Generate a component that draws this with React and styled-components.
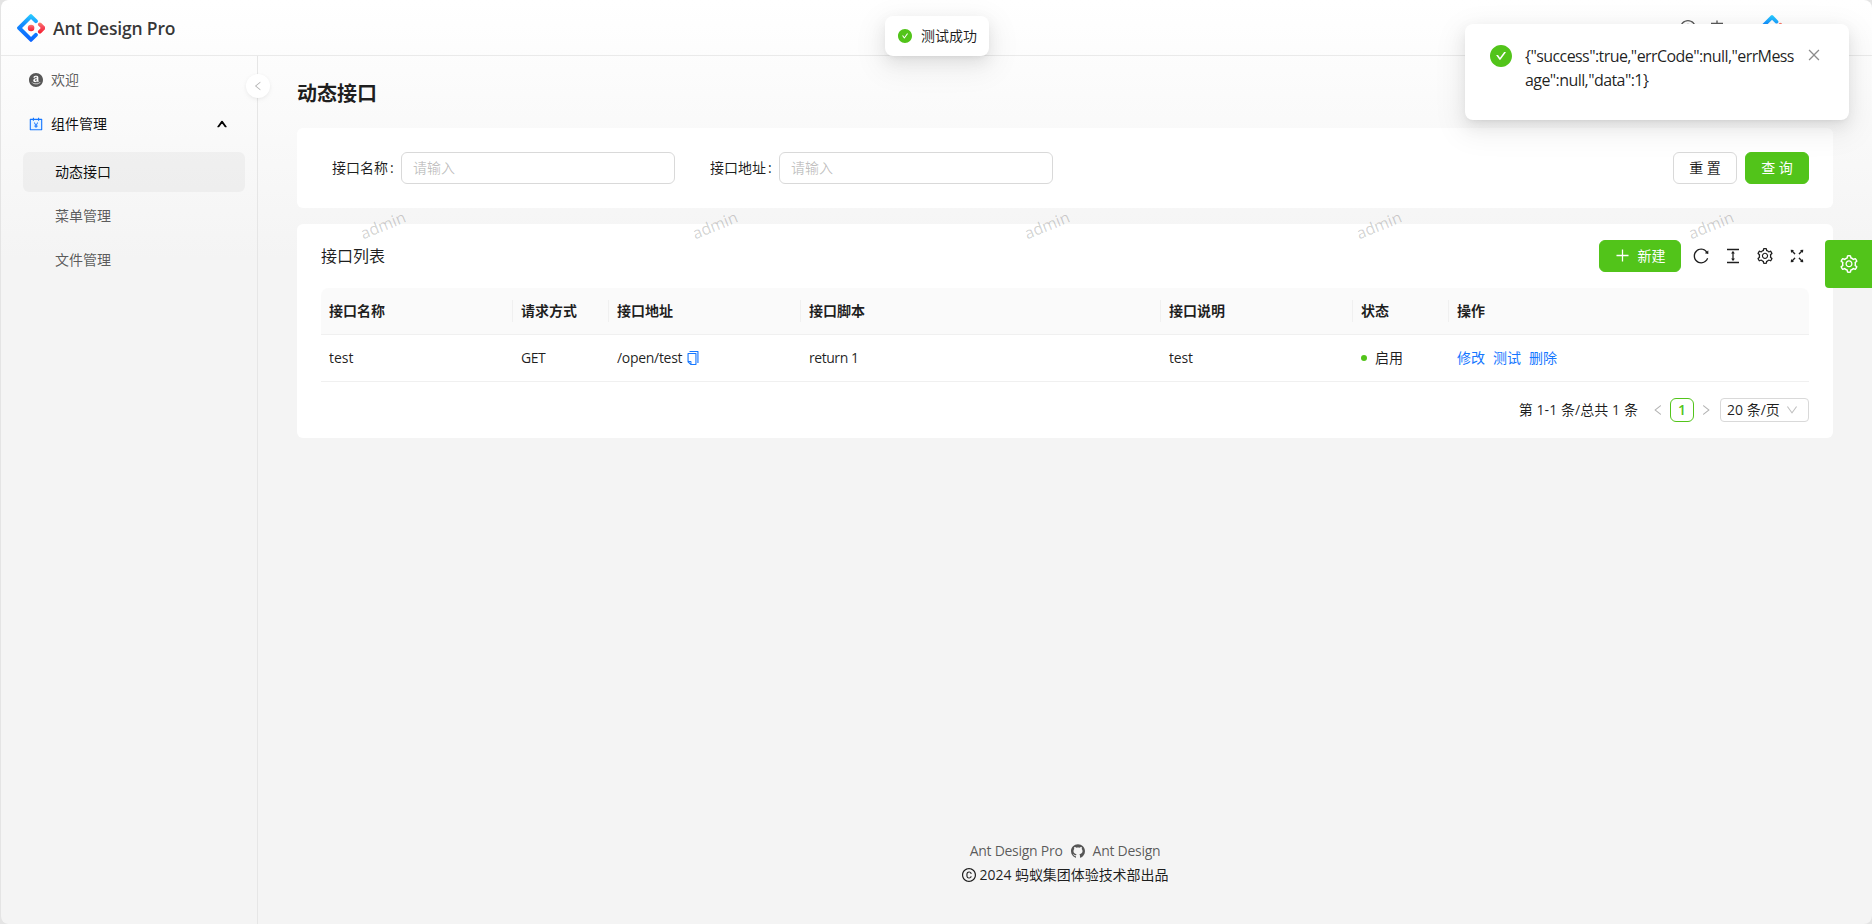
import React from "react";
import styled, { createGlobalStyle } from "styled-components";
import {
  AiFillAmazonCircle, AiOutlineReload, AiOutlineColumnHeight, AiOutlineSetting, AiOutlineFullscreen,
  AiFillCheckCircle, AiOutlineClose, AiOutlinePlus, AiOutlineLeft, AiOutlineRight, AiOutlineDown,
  AiOutlineUp, AiFillGithub, AiOutlineCopyright, AiOutlineCopy, AiOutlineAccountBook, AiOutlineQuestionCircle,
} from "react-icons/ai";

const GREEN = "#52c41a";
const BLUE = "#1677ff";
const TEXT = "rgba(0,0,0,.88)";
const MUTED = "rgba(0,0,0,.65)";

const GlobalStyle = createGlobalStyle`
  * { box-sizing: border-box; }
  body {
    margin: 0;
    background: #e4e4e4;
    font-family: "Open Sans", "Noto Sans CJK SC", sans-serif;
    font-size: 14px;
    line-height: 22px;
    color: ${TEXT};
    overflow: hidden;
  }
  svg { display: block; flex: none; }
  /* the icon set keeps a 64-unit margin inside its 1024 box; scale it away */
  svg[viewBox="0 0 1024 1024"] { transform: scale(1.143); }
`;

const Page = styled.div`
  position: relative;
  display: flex;
  flex-direction: column;
  height: 924px;
  border-left: 1px solid #e4e4e4;
  border-radius: 8px;
  overflow: hidden;
  background: linear-gradient(#fff, #f4f4f4 28%) #f4f4f4;
`;
const Header = styled.header`
  display: flex;
  align-items: center;
  justify-content: space-between;
  height: 56px;
  flex: none;
  padding: 0 16px;
  border-bottom: 1px solid #eaeaea;
`;
const Brand = styled.div`
  display: flex;
  align-items: center;
  gap: 8px;
`;
const BrandName = styled.h1`
  margin: 0;
  font-size: 17.5px;
  font-weight: 600;
  color: rgba(0,0,0,.8);
  letter-spacing: -.18px;
`;
const HeaderTools = styled.div`
  display: flex;
  align-items: center;
  color: ${MUTED};
  font-size: 16px;
  gap: 13px;
  padding-right: 71px;
`;
const Avatar = styled.span`
  margin-left: 21px;
`;
const Body = styled.div`
  display: flex;
  flex: 1;
  min-height: 0;
`;
const Sider = styled.nav`
  position: relative;
  width: 257px;
  flex: none;
  padding: 4px 12px 0 22px;
  border-right: 1px solid #e6e6e6;
`;
const MenuItem = styled.div`
  display: flex;
  align-items: center;
  gap: 8px;
  height: 40px;
  margin-bottom: 4px;
  padding: 0 18px 0 6px;
  color: ${(p) => (p.$dark ? "rgba(0,0,0,.95)" : MUTED)};
`;
const BookIcon = styled(AiOutlineAccountBook)`
  color: ${BLUE};
  background: linear-gradient(#e6f4ff, #e6f4ff) center 60% / 70% 62% no-repeat;
`;
const SubItem = styled.div`
  display: flex;
  align-items: center;
  height: 40px;
  margin-bottom: 4px;
  padding-left: 32px;
  border-radius: 6px;
  color: ${(p) => (p.$active ? "rgba(0,0,0,.95)" : MUTED)};
  background: ${(p) => (p.$active ? "rgba(0,0,0,.035)" : "transparent")};
`;
const SubMenu = styled.div`
  padding-top: 4px;
`;
const Grow = styled.span`
  flex: 1;
`;
const CollapseButton = styled.div`
  position: absolute;
  top: 18px;
  right: -13px;
  width: 24px;
  height: 24px;
  display: flex;
  align-items: center;
  justify-content: center;
  border-radius: 50%;
  background: #fff;
  color: rgba(0,0,0,.3);
  font-size: 10px;
  box-shadow: 0 2px 8px -2px rgba(0,0,0,.06), 0 1px 4px -1px rgba(25,15,15,.08);
`;
const Main = styled.main`
  flex: 1;
  display: flex;
  flex-direction: column;
  padding: 22px 39px 0 39px;
`;
const Title = styled.h2`
  margin: 0 0 18px;
  font-size: 20px;
  line-height: 32px;
  font-weight: 700;
`;
const Card = styled.section`
  border-radius: 6px;
  background: #fff;
`;
const SearchCard = styled(Card)`
  display: flex;
  align-items: center;
  height: 80px;
  margin-bottom: 16px;
  padding: 0 24px 0 35px;
`;
const Field = styled.label`
  display: flex;
  align-items: center;
  width: 378px;
`;
const FieldLabel = styled.span`
  width: 69px;
  &::after { content: ":"; margin-left: 2px; }
`;
const TextInput = styled.input`
  width: 274px;
  height: 32px;
  padding: 0 11px 2px;
  border: 1px solid #d9d9d9;
  border-radius: 6px;
  background: #fff;
  font: inherit;
  &::placeholder { color: rgba(0,0,0,.25); }
`;
const Button = styled.button`
  display: flex;
  align-items: center;
  justify-content: center;
  gap: 8px;
  width: ${(p) => p.$width};
  height: 32px;
  padding: 0 0 1px;
  margin-left: 8px;
  border: 1px solid ${(p) => (p.$primary ? GREEN : "#d9d9d9")};
  border-radius: 6px;
  background: ${(p) => (p.$primary ? GREEN : "#fff")};
  color: ${(p) => (p.$primary ? "#fff" : TEXT)};
  font: inherit;
`;
const ListCard = styled(Card)`
  height: 214px;
  padding: 0 24px;
`;
const Toolbar = styled.div`
  display: flex;
  align-items: center;
  height: 64px;
`;
const ToolbarTitle = styled.span`
  flex: 1;
  font-size: 16px;
`;
const ToolIcons = styled.div`
  display: flex;
  gap: 16px;
  margin: 0 4px 0 12px;
  font-size: 16px;
`;
const Row = styled.div`
  display: grid;
  grid-template-columns: 192px 96px 192px 360px 192px 96px 1fr;
  align-items: center;
  height: 47px;
  border-bottom: 1px solid #f0f0f0;
`;
const HeadRow = styled(Row)`
  background: #fafafa;
  border-radius: 8px 8px 0 0;
  font-weight: 700;
`;
const Cell = styled.div`
  display: flex;
  align-items: center;
  padding: 0 8px;
  height: 22px;
  border-right: 1px solid ${(p) => (p.$divider ? "#f0f0f0" : "transparent")};
`;
const CellText = styled.span`
  letter-spacing: ${(p) => p.$ls || "0"};
`;
const CopyIcon = styled(AiOutlineCopy)`
  margin-left: 4px;
  color: ${BLUE};
`;
const StatusDot = styled.i`
  width: 6px;
  height: 6px;
  margin-right: 8px;
  border-radius: 50%;
  background: ${GREEN};
`;
const Actions = styled.div`
  display: flex;
  gap: 8px;
  color: ${BLUE};
`;
const Pagination = styled.div`
  display: flex;
  align-items: center;
  justify-content: flex-end;
  height: 24px;
  margin-top: 16px;
`;
const PageTotal = styled.span`
  margin-right: 8px;
  letter-spacing: .08px;
`;
const PageArrow = styled.span`
  display: flex;
  justify-content: center;
  width: 24px;
  color: rgba(0,0,0,.3);
  font-size: 12px;
`;
const PageNumber = styled.span`
  display: flex;
  align-items: center;
  justify-content: center;
  width: 24px;
  height: 24px;
  border: 1px solid ${GREEN};
  border-radius: 6px;
  color: ${GREEN};
  font-weight: 600;
  background: #fff;
`;
const PageSize = styled.div`
  display: flex;
  align-items: center;
  justify-content: space-between;
  width: 89px;
  height: 24px;
  margin-left: 2px;
  padding: 0 10px 0 6px;
  border: 1px solid #d9d9d9;
  border-radius: 4px;
  svg { color: rgba(0,0,0,.25); font-size: 12px; }
`;
const Footer = styled.footer`
  margin-top: auto;
  margin-bottom: 38px;
  display: flex;
  flex-direction: column;
  align-items: center;
  gap: 2px;
`;
const FooterLine = styled.div`
  display: flex;
  align-items: center;
  gap: ${(p) => p.$gap};
  color: ${(p) => (p.$muted ? MUTED : TEXT)};
`;
const Latin = styled.span`
  letter-spacing: ${(p) => p.$ls || "-.27px"};
`;
const Watermark = styled.span`
  position: absolute;
  left: ${(p) => p.$x}px;
  top: 215px;
  width: 48px;
  text-align: center;
  font-size: 16px;
  line-height: 20px;
  color: rgba(0,0,0,.19);
  transform: rotate(-22deg);
`;
const Message = styled.div`
  position: absolute;
  left: 884px;
  top: 16px;
  display: flex;
  align-items: center;
  gap: 8px;
  width: 104px;
  height: 40px;
  padding: 0 12px;
  border-radius: 8px;
  background: #fff;
  box-shadow: 0 6px 16px 0 rgba(0,0,0,.08), 0 3px 6px -4px rgba(0,0,0,.12), 0 9px 28px 8px rgba(0,0,0,.05);
  > svg { color: ${GREEN}; font-size: 14px; margin: 1px; }
`;
const Notice = styled.div`
  position: absolute;
  left: 1464px;
  top: 24px;
  display: flex;
  width: 384px;
  height: 96px;
  padding: 20px 24px;
  border-radius: 8px;
  background: #fff;
  font-size: 16px;
  line-height: 24px;
  box-shadow: 0 6px 16px 0 rgba(0,0,0,.08), 0 3px 6px -4px rgba(0,0,0,.12), 0 9px 28px 8px rgba(0,0,0,.05);
`;
const NoticeIcon = styled(AiFillCheckCircle)`
  margin: 1px 0 0 1px;
  color: ${GREEN};
`;
const NoticeText = styled.div`
  margin: 0 0 0 13px;
  width: 278px;
  white-space: nowrap;
  letter-spacing: -.58px;
`;
const NoticeClose = styled.span`
  margin: 4px 0 0 4px;
  color: rgba(0,0,0,.45);
`;
const SettingDrawerHandle = styled.div`
  position: absolute;
  right: 0;
  top: 240px;
  width: 47px;
  height: 48px;
  display: flex;
  align-items: center;
  justify-content: center;
  border-radius: 4px 0 0 4px;
  background: ${GREEN};
  color: #fff;
`;

function AntLogo({ size, id }) {
  return (
    <svg width={size} height={size} viewBox="0 0 200 200">
      <defs>
        <linearGradient id={id + "a"} x1="62%" y1="0%" x2="50%" y2="100%">
          <stop offset="0" stopColor="#29cdff" />
          <stop offset=".38" stopColor="#148eff" />
          <stop offset="1" stopColor="#0a60ff" />
        </linearGradient>
        <linearGradient id={id + "b"} x1="0" y1="0" x2="0" y2="1">
          <stop offset="0" stopColor="#fa816e" />
          <stop offset=".4" stopColor="#f74a5c" />
          <stop offset="1" stopColor="#f51d2c" />
        </linearGradient>
      </defs>
      <path d="M91.6 4.2 4.2 91.5a11.7 11.7 0 0 0 0 16.6l87.4 87.3a11.7 11.7 0 0 0 16.6 0l36.6-36.6a13.9 13.9 0 0 0-19.7-19.7L101.6 163a2 2 0 0 1-2.8 0L37.6 101.6a2 2 0 0 1 0-2.8l61.2-61.2a2 2 0 0 1 2.8 0l23.6 23.5a13.9 13.9 0 0 0 19.7-19.7L108.2 4.7a11.7 11.7 0 0 0-16.6-.5z" fill={`url(#${id}a)`} />
      <path d="M153.7 135.9a13.9 13.9 0 0 0 19.7 0l22.9-22.9a18 18 0 0 0 0-25.6l-23.1-23a13.9 13.9 0 0 0-19.6 19.7l14.4 14.4a2 2 0 0 1 0 2.8l-14.3 14.9a13.9 13.9 0 0 0 0 19.7z" fill={`url(#${id}b)`} />
      <circle cx="100.5" cy="100.5" r="23.5" fill={`url(#${id}b)`} />
    </svg>
  );
}

function TranslateIcon() {
  return (
    <svg width="16" height="16" viewBox="0 0 16 16" fill="none" stroke="currentColor" strokeWidth="1.3">
      <path d="M8 .5v3M2 3.3h12M4.5 4.5c1.500 4 4 7 8 9M11.5 4.5c-1 4-4 7-8.500 9" />
    </svg>
  );
}

const columns = ["接口名称", "请求方式", "接口地址", "接口脚本", "接口说明", "状态", "操作"];
const watermarks = [358, 690, 1022, 1354, 1686];

export default function App() {
  return (
    <>
      <GlobalStyle />
      <Page>
        <Header>
          <Brand>
            <AntLogo size={28} id="brand" />
            <BrandName>Ant Design Pro</BrandName>
          </Brand>
          <HeaderTools>
            <AiOutlineQuestionCircle />
            <TranslateIcon />
            <Avatar><AntLogo size={26} id="avatar" /></Avatar>
          </HeaderTools>
        </Header>
        <Body>
          <Sider>
            <MenuItem>
              <AiFillAmazonCircle />
              欢迎
            </MenuItem>
            <MenuItem $dark>
              <BookIcon />
              组件管理
              <Grow />
              <AiOutlineUp size={10} strokeWidth={90} />
            </MenuItem>
            <SubMenu>
              <SubItem $active>动态接口</SubItem>
              <SubItem>菜单管理</SubItem>
              <SubItem>文件管理</SubItem>
            </SubMenu>
            <CollapseButton><AiOutlineLeft /></CollapseButton>
          </Sider>
          <Main>
            <Title>动态接口</Title>
            <SearchCard>
              <Field><FieldLabel>接口名称</FieldLabel><TextInput placeholder="请输入" /></Field>
              <Field><FieldLabel>接口地址</FieldLabel><TextInput placeholder="请输入" /></Field>
              <Grow />
              <Button $width="64px">重 置</Button>
              <Button $width="64px" $primary>查 询</Button>
            </SearchCard>
            <ListCard>
              <Toolbar>
                <ToolbarTitle>接口列表</ToolbarTitle>
                <Button $width="82px" $primary><AiOutlinePlus size={15} />新建</Button>
                <ToolIcons>
                  <AiOutlineReload />
                  <AiOutlineColumnHeight />
                  <AiOutlineSetting />
                  <AiOutlineFullscreen />
                </ToolIcons>
              </Toolbar>
              <HeadRow>
                {columns.map((c, i) => (
                  <Cell key={c} $divider={i < columns.length - 1}>{c}</Cell>
                ))}
              </HeadRow>
              <Row>
                <Cell>test</Cell>
                <Cell><CellText $ls="-.5px">GET</CellText></Cell>
                <Cell><CellText $ls="-.3px">/open/test</CellText><CopyIcon /></Cell>
                <Cell><CellText $ls="-.45px">return 1</CellText></Cell>
                <Cell><CellText $ls="-.2px">test</CellText></Cell>
                <Cell><StatusDot />启用</Cell>
                <Cell><Actions><span>修改</span><span>测试</span><span>删除</span></Actions></Cell>
              </Row>
              <Pagination>
                <PageTotal>第 1-1 条/总共 1 条</PageTotal>
                <PageArrow><AiOutlineLeft /></PageArrow>
                <PageNumber>1</PageNumber>
                <PageArrow><AiOutlineRight /></PageArrow>
                <PageSize>20 条/页<AiOutlineDown /></PageSize>
              </Pagination>
            </ListCard>
            <Footer>
              <FooterLine $muted $gap="8px"><Latin>Ant Design Pro</Latin><AiFillGithub /><Latin>Ant Design</Latin></FooterLine>
              <FooterLine $gap="4px"><AiOutlineCopyright /><Latin $ls="-.05px">2024 蚂蚁集团体验技术部出品</Latin></FooterLine>
            </Footer>
          </Main>
        </Body>
        {watermarks.map((x) => <Watermark key={x} $x={x}>admin</Watermark>)}
        <SettingDrawerHandle><AiOutlineSetting size={18} /></SettingDrawerHandle>
        <Message><AiFillCheckCircle />测试成功</Message>
        <Notice>
          <NoticeIcon size={22} />
          <NoticeText>{'{"success":true,"errCode":null,"errMess'}<br />{'age":null,"data":1}'}</NoticeText>
          <NoticeClose><AiOutlineClose size={14} /></NoticeClose>
        </Notice>
      </Page>
    </>
  );
}
